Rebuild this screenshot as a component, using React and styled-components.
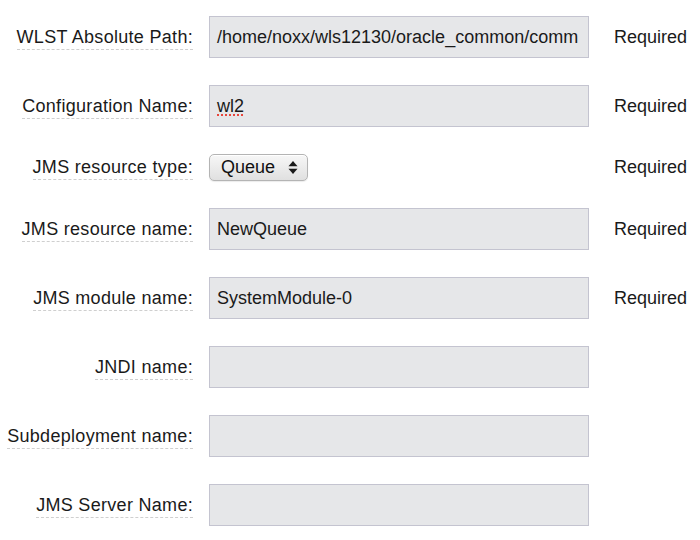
import React from "react";
import styled, { createGlobalStyle } from "styled-components";

const Global = createGlobalStyle`
  html, body { margin: 0; padding: 0; background: #ffffff; }
  body { font-family: "Liberation Sans", Arial, Helvetica, sans-serif; color: #1a1a1a; }
`;

const Form = styled.div`
  display: grid;
  grid-template-columns: 193px 380px auto;
  column-gap: 16px;
  row-gap: 27px;
  align-items: center;
  padding: 16px 0 0 0;
  font-size: 18px;
`;

const LabelCell = styled.div`
  text-align: right;
  white-space: nowrap;
`;

const Label = styled.span`
  display: inline-block;
  line-height: 21px;
  padding: 2px 0 1px 0;
  letter-spacing: 0.3px;
  border-bottom: 1px dashed #cfcfcf;
`;

const Field = styled.div`
  box-sizing: border-box;
  height: 42px;
  width: 380px;
  padding: 0 0 0 7px;
  display: flex;
  align-items: center;
  background: #e6e7e9;
  border: 1px solid #c4c4d0;
  white-space: nowrap;
  overflow: hidden;
  color: #1a1a1a;
`;

const Misspelled = styled.span`
  text-decoration: underline dotted #e8463c;
  text-decoration-thickness: 2px;
  text-underline-offset: 3px;
`;

const Select = styled.div`
  box-sizing: border-box;
  width: 99px;
  height: 27px;
  display: flex;
  align-items: center;
  justify-content: space-between;
  padding: 0 9px 0 11px;
  border: 1px solid #b4b4b4;
  border-radius: 5px;
  background: linear-gradient(#f7f7f7, #e0e0e0);
  box-shadow: inset 0 1px 0 #ffffff, 0 1px 1px rgba(0, 0, 0, 0.08);
  color: #111;
`;

const Required = styled.div`
  margin-left: 9px;
  white-space: nowrap;
  color: #1a1a1a;
`;

const Empty = styled.div``;

const Arrows = () => (
  <svg width="10" height="15" viewBox="0 0 10 15">
    <path d="M5 1 L9.5 6.3 L0.5 6.3 Z" fill="#1a1a1a" />
    <path d="M5 14 L9.5 8.7 L0.5 8.7 Z" fill="#1a1a1a" />
  </svg>
);

const rows = [
  { label: "WLST Absolute Path:", value: "/home/noxx/wls12130/oracle_common/comm", required: true },
  { label: "Configuration Name:", value: "wl2", misspelled: true, required: true },
  { label: "JMS resource type:", select: "Queue", required: true },
  { label: "JMS resource name:", value: "NewQueue", required: true },
  { label: "JMS module name:", value: "SystemModule-0", required: true },
  { label: "JNDI name:", value: "" },
  { label: "Subdeployment name:", value: "" },
  { label: "JMS Server Name:", value: "" },
];

export default function App() {
  return (
    <>
      <Global />
      <Form>
        {rows.map((r) => (
          <React.Fragment key={r.label}>
            <LabelCell>
              <Label>{r.label}</Label>
            </LabelCell>
            {r.select ? (
              <div>
                <Select>
                  <span>{r.select}</span>
                  <Arrows />
                </Select>
              </div>
            ) : (
              <Field>{r.misspelled ? <Misspelled>{r.value}</Misspelled> : r.value}</Field>
            )}
            {r.required ? <Required>Required</Required> : <Empty />}
          </React.Fragment>
        ))}
      </Form>
    </>
  );
}
